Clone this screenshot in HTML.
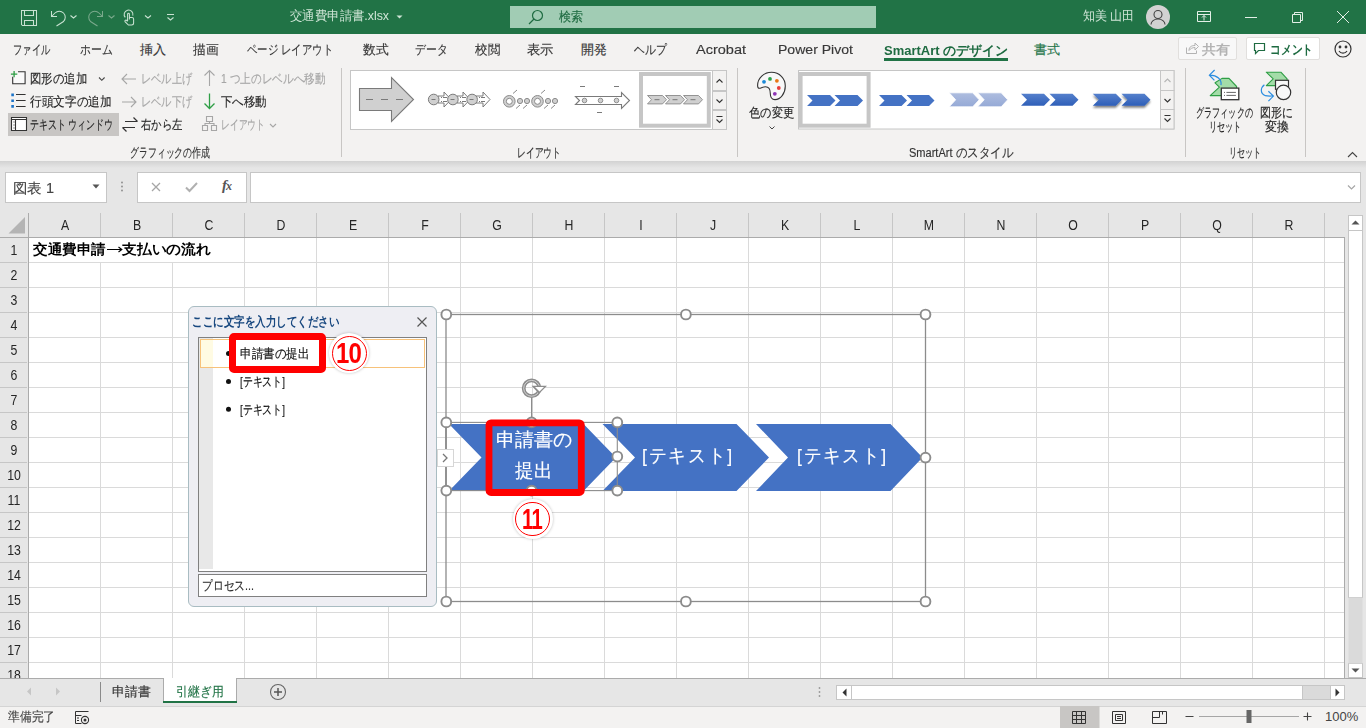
<!DOCTYPE html>
<html lang="ja"><head><meta charset="utf-8">
<style>
*{margin:0;padding:0;box-sizing:border-box}
html,body{width:1366px;height:728px;overflow:hidden;background:#fff;font-family:"Liberation Sans",sans-serif;color:#262626}
.a{position:absolute;white-space:nowrap}
.f{-webkit-text-stroke:0.15px currentColor}
.f[style*="bold"]{-webkit-text-stroke:0}
#title{left:0;top:0;width:1366px;height:34px;background:#217346}
#ribbon{left:0;top:34px;width:1366px;height:127px;background:#f3f2f1}
#fbar{left:0;top:161px;width:1366px;height:52px;background:#e6e6e6}
#shadow{left:0;top:161px;width:1366px;height:7px;background:linear-gradient(#d2d2d2,#e6e6e6)}
#colhdr{left:0;top:213px;width:1345px;height:24px;background:#e6e6e6}
#grid{left:28px;top:237px;width:1317px;height:441px;background:#fff;
 background-image:linear-gradient(to right,#dadada 1px,transparent 1px),linear-gradient(to bottom,#dadada 1px,transparent 1px);
 background-size:72px 25px;background-position:0 0}
#rowhdr{left:0;top:237px;width:28px;height:441px;background:#e6e6e6}
#vscroll{left:1345px;top:213px;width:21px;height:465px;background:#e6e6e6}
#tabbar{left:0;top:678px;width:1366px;height:28px;background:#e6e6e6;border-top:1px solid #ababab}
#status{left:0;top:706px;width:1366px;height:22px;background:#f3f2f1;border-top:1px solid #d4d4d4}
.tab{font-size:13px;color:#383838;top:41px}
.rb{font-size:12.5px;color:#262626}
.dis{color:#a6a6a6}
.gl{font-size:12.5px;color:#333;top:144.5px}
.sep{width:1px;background:#c8c6c4;top:68px;height:89px}
.ch{font-size:15px;color:#262626;top:216px;width:72px;text-align:center;transform:scaleX(.82)}
.rh{font-size:15px;color:#262626;left:0;width:28px;text-align:center;transform:scaleX(.82)}
</style></head><body>
<div id="title" class="a">
<svg class="a" style="left:0;top:0" width="190" height="34" fill="none" stroke="#c9e2d2" stroke-width="1.05">
<path d="M21.5 10.5h15v15h-14l-1-1z M24.5 10.5v5h9v-5 M24.5 25.5v-5h9v5"/>
<path d="M51.5 11v5.5h5.5 M51.5 16.5 L55 13 a6 6 0 0 1 8.5 8.5 L56.5 26"/>
<path d="M70.5 15.5l3 2.5 3-2.5"/>
<g stroke="#7aa98c"><path d="M102.5 11v5.5h-5.5 M102.5 16.5 L99 13 a6 6 0 0 0 -8.5 8.5 L97.5 26"/><path d="M108.5 15.5l3 2.5 3-2.5"/></g>
<path d="M125.3 17.4A4.4 4.4 0 1 1 132.8 15.6 M127.6 21V14.2a0.9 0.9 0 0 1 1.8 0V19.5 M129.4 17.4h2.6a1.6 1.6 0 0 1 1.6 1.6V23a2 2 0 0 1-2 2h-3.2l-3.4-3.4a1 1 0 0 1 1.4-1.3l1.2 1"/>
<path d="M145 15.5l3 2.5 3-2.5"/>
<path d="M167 14.5h7 M167.5 17.5l3 2.5 3-2.5"/>
</svg>
<div class="a f" style="left:290px;top:7px;width:99px;font-size:13px;color:#cfe5d6;-webkit-text-stroke:0">交通費申請書.xlsx</div>
<svg class="a" style="left:396px;top:15px" width="7" height="5"><path d="M0.5 0.5h6l-3 3z" fill="#cfe5d6"/></svg>
<div class="a" style="left:510px;top:6px;width:366px;height:22px;background:#a1ccb4"></div>
<svg class="a" style="left:528px;top:8px" width="16" height="17" fill="none" stroke="#1e6b41" stroke-width="1.2"><circle cx="9.5" cy="7.5" r="5"/><path d="M6 11l-5 5"/></svg>
<div class="a f" style="left:559px;top:8px;width:24px;font-size:13px;color:#1e6b41">検索</div>
<div class="a f" style="left:1083px;top:7px;width:51.5px;font-size:13px;color:#cfe5d6;-webkit-text-stroke:0">知美 山田</div>
<div class="a" style="left:1146px;top:5px;width:24px;height:24px;border-radius:50%;background:#d2d2d2"></div>
<svg class="a" style="left:1146px;top:5px" width="24" height="24" fill="none" stroke="#444" stroke-width="1.1"><circle cx="12" cy="9.5" r="4"/><path d="M5 19.5a7 5.5 0 0 1 14 0"/></svg>
<svg class="a" style="left:1190px;top:8px" width="170" height="18" fill="none" stroke="#e3efe7" stroke-width="1">
<path d="M7.5 3.5h13v10h-13z M7.5 6.5h13 M14 12.5v-5 M12 9.5l2-2 2 2"/>
<path d="M55 9.5h12"/>
<path d="M102.5 6.5h8v8h-8z M104.5 6.5v-2h8v8h-2"/>
<path d="M147 3l12 12 M159 3l-12 12"/>
</svg>
</div>
<div id="ribbon" class="a"></div>
<div class="a tab f" style="left:13px;width:37px">ファイル</div>
<div class="a tab f" style="left:80px;width:32.5px">ホーム</div>
<div class="a tab f" style="left:140px;width:26px">挿入</div>
<div class="a tab f" style="left:193px;width:25.5px">描画</div>
<div class="a tab f" style="left:247px;width:86px">ページ レイアウト</div>
<div class="a tab f" style="left:363px;width:25.5px">数式</div>
<div class="a tab f" style="left:415px;width:32.5px">データ</div>
<div class="a tab f" style="left:475px;width:25px">校閲</div>
<div class="a tab f" style="left:527px;width:26.5px">表示</div>
<div class="a tab f" style="left:581px;width:26px">開発</div>
<div class="a tab f" style="left:634px;width:32.5px">ヘルプ</div>
<div class="a tab f" style="left:696px;width:50px;top:42px">Acrobat</div>
<div class="a tab f" style="left:778px;width:75px;top:42px">Power Pivot</div>
<div class="a tab f" style="left:884px;width:124px;top:42px;color:#1e6b41;font-weight:bold">SmartArt のデザイン</div>
<div class="a" style="left:884px;top:58px;width:124px;height:3px;background:#217346"></div>
<div class="a tab f" style="left:1034px;width:26px;color:#217346">書式</div>
<div class="a" style="left:1178px;top:37px;width:59px;height:23px;border:1px solid #e1dfdd;border-radius:2px;background:#f8f8f8"></div>
<svg class="a" style="left:1185px;top:41px" width="14" height="14" fill="none" stroke="#b3b3b3" stroke-width="1"><path d="M1.5 6.5v6h10v-3 M4 9.5c0-4 3-5 6-5v-2.5l3.5 3.5-3.5 3.5v-2.5c-2.5 0-4.5 1-6 3"/></svg>
<div class="a f" style="left:1202px;top:41px;width:28px;font-size:13px;color:#b3b3b3;font-weight:bold">共有</div>
<div class="a" style="left:1246px;top:37px;width:74px;height:23px;border:1px solid #e1dfdd;border-radius:2px;background:#fff"></div>
<svg class="a" style="left:1253px;top:42px" width="14" height="14" fill="none" stroke="#1e6b41" stroke-width="1.2"><path d="M1.5 1.5h10v7h-6l-3 3v-3h-1z"/></svg>
<div class="a f" style="left:1270px;top:41px;width:43px;font-size:13px;color:#1e6b41;font-weight:bold">コメント</div>
<svg class="a" style="left:1333px;top:39px" width="20" height="20" fill="none" stroke="#333" stroke-width="1.2"><circle cx="10" cy="10" r="8"/><circle cx="7" cy="8" r=".8" fill="#333"/><circle cx="13" cy="8" r=".8" fill="#333"/><path d="M6 12a4.5 4 0 0 0 8 0"/></svg>
<!-- group1 -->
<div class="a" style="left:8px;top:113px;width:111px;height:23px;background:#c8c6c4"></div>
<svg class="a" style="left:8px;top:68px" width="280" height="72" fill="none" stroke-width="1.1">
<path d="M10 3.8h7.1v12h-12.4v-7.1" fill="#fafafa" stroke="#333"/>
<path d="M6.1 2.9v6.4 M2.9 6.1h6.4" stroke="#2e9e45" stroke-width="1.3"/>
<path d="M3.3 25.6h2.6v2.6h-2.6z M3.3 31.5h2.6v2.6h-2.6z M3.3 37.1h2.6v2.6h-2.6z" fill="#1a73c8" stroke="none"/>
<path d="M8 26.5h9.6 M8 32.5h9.6 M8 38.5h9.6" stroke="#333"/>
<path d="M3.5 49.5h15v13h-15z" fill="#fff" stroke="#333"/><path d="M3.5 51.5h15 M7.5 51.5v11 M5.5 54h1 M5.5 57h1 M5.5 60h1" stroke="#333"/>
<path d="M91 9.5l2.8 2.8 2.8-2.8" stroke="#444"/>
<g stroke="#a6a6a6"><path d="M114 11h14 M119 6l-5 5 5 5"/><path d="M114 34h14 M123 29l5 5-5 5"/>
<path d="M201.5 2.5v15.5 M196.5 7.5l5-5 5 5"/>
<path d="M198.5 48.5h6v5h-6z M194.5 57.5h5v5h-5z M203.5 57.5h5v5h-5z M201.5 53.5v2 M197 57.5v-2h9v2"/>
<path d="M262 56l3 3 3-3"/></g>
<path d="M117 53.5h12.5 M125.5 49.5l4 4 M127 59.5h-12.5 M118.5 63.5l-4-4" stroke="#333" stroke-width="1.2"/>
<path d="M201.5 25.5v15 M196.5 35.5l5 5 5-5" stroke="#2e9e45" stroke-width="1.3"/>
</svg>
<div class="a rb f" style="left:30px;top:71px;width:57px">図形の追加</div>
<div class="a rb f" style="left:30px;top:94px;width:81.5px">行頭文字の追加</div>
<div class="a rb f" style="left:30px;top:117px;width:83px">テキスト ウィンドウ</div>
<div class="a rb dis f" style="left:141px;top:71px;width:51px">レベル上げ</div>
<div class="a rb dis f" style="left:141px;top:94px;width:51px">レベル下げ</div>
<div class="a rb f" style="left:141px;top:117px;width:41.6px">右から左</div>
<div class="a rb dis f" style="left:221px;top:71px;width:104.6px">1 つ上のレベルへ移動</div>
<div class="a rb f" style="left:221px;top:94px;width:45.7px">下へ移動</div>
<div class="a rb dis f" style="left:221px;top:117px;width:44px">レイアウト</div>
<div class="a gl f" style="left:129.5px;width:80px">グラフィックの作成</div>
<div class="a sep" style="left:341px"></div>
<!-- galleries -->
<svg class="a" style="left:0;top:0" width="1366" height="161" fill="none">
<rect x="350.5" y="70.5" width="376" height="59" fill="#fff" stroke="#c6c6c6"/>
<rect x="712.5" y="70.5" width="14" height="20" fill="#f3f2f1" stroke="#c6c6c6"/>
<rect x="712.5" y="91.5" width="14" height="18" fill="#f3f2f1" stroke="#c6c6c6"/>
<rect x="712.5" y="110.5" width="14" height="19" fill="#f3f2f1" stroke="#c6c6c6"/>
<g stroke="#333" stroke-width="1.1"><path d="M716.5 82.5l3-3 3 3 M716.5 99.5l3 3 3-3 M716.5 116.5h6 M716.5 119.5l3 3 3-3"/></g>
<!-- item1 -->
<path d="M359.5 88.5h32v-11l22 22-22 22v-11h-32z" fill="#d0d0d0" stroke="#7a7a7a" stroke-width="1.1"/>
<path d="M366 99.5h7 M381 99.5h7 M396 99.5h7" stroke="#7a7a7a" stroke-width="1.1"/>
<!-- item2 -->
<g stroke="#7a7a7a" stroke-width="1">
<path d="M438 96h6v-4l7 7.5-7 7.5v-4h-6z" fill="#fff"/>
<path d="M457 96h6v-4l7 7.5-7 7.5v-4h-6z" fill="#fff"/>
<path d="M476 96h7v-4l7 7.5-7 7.5v-4h-7z" fill="#fff"/>
<circle cx="433.7" cy="99.5" r="5.3" fill="#d0d0d0"/><circle cx="452.9" cy="99.5" r="5.3" fill="#d0d0d0"/><circle cx="472.1" cy="99.5" r="5.3" fill="#d0d0d0"/>
<path d="M431.5 99.5h4 M450.5 99.5h4 M469.5 99.5h4 M441 97.5h1 M443 97.5h4 M441 101.5h1 M443 101.5h4 M460 97.5h1 M462 97.5h4 M460 101.5h1 M462 101.5h4 M479 97.5h1 M481 97.5h4 M479 101.5h1 M481 101.5h4"/>
</g>
<!-- item3 -->
<g stroke="#8a8a8a" stroke-width="1">
<circle cx="509.3" cy="101.3" r="5.8" fill="#d0d0d0"/><circle cx="509.3" cy="101.3" r="3" fill="#fff"/>
<circle cx="537.5" cy="101.3" r="5.8" fill="#d0d0d0"/><circle cx="537.5" cy="101.3" r="3" fill="#fff"/>
<circle cx="520" cy="101" r="2.6" fill="#d0d0d0"/><circle cx="527" cy="101" r="2.6" fill="#d0d0d0"/>
<circle cx="548" cy="101" r="2.6" fill="#d0d0d0"/><circle cx="555" cy="101" r="2.6" fill="#d0d0d0"/>
<path d="M513 93.5l4-3.5 M541 93.5l4-3.5 M516 108.5l4-3.5 M523 108.5l4-3.5 M544 108.5l4-3.5 M551 108.5l4-3.5"/>
</g>
<!-- item4 -->
<g stroke="#7a7a7a" stroke-width="1.1">
<path d="M575.5 96.5h46v-4l8 8-8 8v-4h-46l4-4z" fill="#fff"/>
<circle cx="584.5" cy="100.5" r="2.3" fill="#d0d0d0" stroke-width="0.8"/><circle cx="600.5" cy="100.5" r="2.3" fill="#d0d0d0" stroke-width="0.8"/><circle cx="616.5" cy="100.5" r="2.3" fill="#d0d0d0" stroke-width="0.8"/>
<path d="M580 86.5h5 M614 86.5h5 M597 112.5h5"/>
</g>
<!-- item5 -->
<rect x="641" y="74" width="67.8" height="51.7" stroke="#c6c6c6" stroke-width="4"/>
<g stroke="#8a8a8a" stroke-width="0.9" fill="#d0d0d0">
<path d="M647.5 95.5h15.0l4.0 4.2l-4.0 4.2h-15.0l4.0 -4.2z"/><path d="M665.5 95.5h15.0l4.0 4.2l-4.0 4.2h-15.0l4.0 -4.2z"/><path d="M683.5 95.5h15.0l4.0 4.2l-4.0 4.2h-15.0l4.0 -4.2z"/>
</g>
<path d="M654.5 99.7h5 M672.5 99.7h5 M690.5 99.7h5" stroke="#777" stroke-width="1"/>
<!-- style gallery -->
<rect x="798.5" y="70.5" width="375.5" height="58.5" fill="#fff" stroke="#c6c6c6"/>
<rect x="1160.5" y="70.5" width="13.5" height="20" fill="#f3f2f1" stroke="#c6c6c6"/>
<rect x="1160.5" y="90.5" width="13.5" height="19" fill="#f3f2f1" stroke="#c6c6c6"/>
<rect x="1160.5" y="109.5" width="13.5" height="19.5" fill="#f3f2f1" stroke="#c6c6c6"/>
<g stroke-width="1.1"><path d="M1164.5 82l3-3 3 3" stroke="#b5b5b5"/><path d="M1164.5 99l3 3 3-3 M1164.5 115.5h6 M1164.5 118.5l3 3 3-3" stroke="#333"/></g>
<rect x="800.6" y="74" width="68" height="51.7" stroke="#c6c6c6" stroke-width="4"/>
<defs>
<linearGradient id="g3" x1="0" y1="0" x2="0" y2="1"><stop offset="0" stop-color="#aebddf"/><stop offset="1" stop-color="#95a9d6"/></linearGradient>
<linearGradient id="g4" x1="0" y1="0" x2="0" y2="1"><stop offset="0" stop-color="#5580cc"/><stop offset="1" stop-color="#2f5fb8"/></linearGradient>
<filter id="sh" x="-20%" y="-30%" width="140%" height="170%"><feGaussianBlur in="SourceAlpha" stdDeviation="1"/><feOffset dy="1.5"/><feComponentTransfer><feFuncA type="linear" slope="0.5"/></feComponentTransfer><feMerge><feMergeNode/><feMergeNode in="SourceGraphic"/></feMerge></filter>
</defs>
<g fill="#4472c4">
<path d="M807.0 95.0h23.0l5.5 5.5l-5.5 5.5h-23.0l5.5 -5.5z"/><path d="M834.5 95.0h23.0l5.5 5.5l-5.5 5.5h-23.0l5.5 -5.5z"/>
<path d="M879.0 95.0h22.5l5.5 5.5l-5.5 5.5h-22.5l5.5 -5.5z"/><path d="M906.5 95.0h22.5l5.5 5.5l-5.5 5.5h-22.5l5.5 -5.5z"/>
</g>
<g fill="url(#g3)" stroke="#fff" stroke-width="0.8">
<path d="M949.2 92.8h23.5l6.5 7.0l-6.5 7.0h-23.5l6.5 -7.0z"/><path d="M977.7 92.8h23.5l6.5 7.0l-6.5 7.0h-23.5l6.5 -7.0z"/>
</g>
<g fill="url(#g4)">
<path d="M1021.0 93.7h23.0l6.0 6.0l-6.0 6.0h-23.0l6.0 -6.0z"/><path d="M1049.5 93.7h23.0l6.0 6.0l-6.0 6.0h-23.0l6.0 -6.0z"/>
</g>
<g fill="url(#g4)" filter="url(#sh)">
<path d="M1092.8 93.7h23.0l6.0 6.0l-6.0 6.0h-23.0l6.0 -6.0z"/><path d="M1121.5 93.7h23.0l6.0 6.0l-6.0 6.0h-23.0l6.0 -6.0z"/>
</g>
<!-- palette -->
<path d="M757.6 85.5C757.6 78 764 72.3 771.5 72.3C779.5 72.3 785.3 78.5 785.3 86C785.3 93.5 780.5 99.6 775 99.6C771.5 99.6 770.3 97 770.3 93.5C770.3 89.5 768.5 86.8 765.5 86.8C762.5 86.8 761 88.3 759.3 88.3C758.2 88.3 757.6 87.2 757.6 85.5z" fill="#f8f8f8" stroke="#333" stroke-width="1.1"/>
<circle cx="764" cy="81.8" r="1.9" fill="#1c8ad7"/><circle cx="770" cy="78.9" r="1.9" fill="#2aa148"/><circle cx="776.9" cy="80.8" r="1.9" fill="#e87715"/><circle cx="778.8" cy="88" r="1.9" fill="#e83e3e"/><circle cx="774.8" cy="93.8" r="1.9" fill="#8e35b5"/>
<path d="M769.5 126.5l2.5 2.5 2.5-2.5" stroke="#444" stroke-width="1"/>
</svg>
<div class="a rb f" style="left:748.5px;top:105px;width:45px">色の変更</div>
<div class="a gl f" style="left:517px;width:44px">レイアウト</div>
<div class="a sep" style="left:737px"></div>
<div class="a gl f" style="left:909px;width:104px">SmartArt のスタイル</div>
<div class="a sep" style="left:1185px"></div>
<div class="a sep" style="left:1305px"></div>
<!-- reset group -->
<svg class="a" style="left:1190px;top:65px" width="176" height="96" fill="none">
<path d="M32 13.4h7l7.6 8.1v9.1h-26.4l9.2-8.4-4.4-4.4z" fill="#a3dca8" stroke="#2e9e45" stroke-width="1.1" stroke-linejoin="round"/>
<rect x="31.3" y="23.1" width="17.5" height="11.6" fill="#fff" stroke="#333" stroke-width="1.3"/>
<path d="M34 27.4h1 M36.4 27.4h9.5 M34 30.4h1 M36.4 30.4h9.5" stroke="#555" stroke-width="0.9"/>
<path d="M31 20.2c1-6-4-10-11-10 M24.6 5l-5.2 5.2 5 5.2" stroke="#2b8de0" stroke-width="1.2"/>
<path d="M76.3 7.2h14.6l6.2 6.6v6.8h-20.8l6.9-6.8z" fill="#a3dca8" stroke="#2e9e45" stroke-width="1.1" stroke-linejoin="round"/>
<rect x="85.5" y="15.3" width="13" height="9" fill="#f8f8f8" stroke="#333" stroke-width="1.2"/>
<circle cx="93.5" cy="27.4" r="7.2" fill="#f8f8f8" stroke="#333" stroke-width="1.2"/>
<path d="M74.4 19.7c-4 3-4.5 9 1 11 2 .5 5 .3 8 .3 M78.4 26.3l5 4.8-5 5" stroke="#2b8de0" stroke-width="1.2"/>
<path d="M158 92l4.5-4.5 4.5 4.5" stroke="#444" stroke-width="1.1"/>
</svg>
<div class="a rb f" style="left:1196px;top:105px;width:56.7px">グラフィックの</div>
<div class="a rb f" style="left:1208.5px;top:119px;width:32.5px">リセット</div>
<div class="a rb f" style="left:1260px;top:105px;width:33px">図形に</div>
<div class="a rb f" style="left:1265px;top:119px;width:24px">変換</div>
<div class="a gl f" style="left:1228.7px;width:32.3px">リセット</div>
<div id="fbar" class="a"></div>
<div id="shadow" class="a"></div>
<div class="a" style="left:5px;top:172px;width:102px;height:31px;background:#fff;border:1px solid #c6c6c6"></div>
<div class="a f" style="left:12.5px;top:180px;width:41px;font-size:14px;color:#444">図表 1</div>

<div class="a" style="left:137px;top:172px;width:110px;height:31px;background:#fff;border:1px solid #c6c6c6"></div>
<div class="a" style="left:222px;top:177px;font-family:'Liberation Serif',serif;font-style:italic;font-weight:bold;font-size:15px;color:#555;letter-spacing:-1px">f<span style="font-size:12px">x</span></div>
<div class="a" style="left:250px;top:172px;width:1111px;height:31px;background:#fff;border:1px solid #c6c6c6"></div>
<svg class="a" style="left:0;top:165px" width="1366" height="48" fill="none">
<path d="M92.5 19.5h7l-3.5 4z" fill="#555"/>
<circle cx="122" cy="17.5" r=".9" fill="#8a8a8a"/><circle cx="122" cy="21.5" r=".9" fill="#8a8a8a"/><circle cx="122" cy="25.5" r=".9" fill="#8a8a8a"/>
<path d="M152 18l8 8 M160 18l-8 8" stroke="#a6a6a6" stroke-width="1.3"/>
<path d="M186 22.5l3.5 3.5 7.5-8" stroke="#b0b0b0" stroke-width="2"/>
<path d="M1348 20.5l3.5 3.5 3.5-3.5" stroke="#a6a6a6" stroke-width="1.2"/>
</svg>

<div id="colhdr" class="a"></div>
<div id="grid" class="a"></div>
<div id="rowhdr" class="a"></div>
<div id="vscroll" class="a"></div>
<svg class="a" style="left:1345px;top:213px" width="21" height="465" fill="none">
<rect x="3.5" y="2.5" width="14" height="15" fill="#fff" stroke="#c6c6c6"/>
<rect x="3.5" y="17.5" width="14" height="367" fill="#fff" stroke="#c6c6c6"/>
<rect x="3.5" y="450.5" width="14" height="14" fill="#fff" stroke="#c6c6c6"/>
<path d="M6.5 11.5h8l-4-4z M6.5 455.5h8l-4 4z" fill="#555"/>
<rect x="3.5" y="384.5" width="14" height="66" fill="#dadada" stroke="none"/>
</svg>
<div class="a ch" style="left:29px">A</div><div class="a ch" style="left:101px">B</div><div class="a ch" style="left:173px">C</div><div class="a ch" style="left:245px">D</div><div class="a ch" style="left:317px">E</div><div class="a ch" style="left:389px">F</div><div class="a ch" style="left:461px">G</div><div class="a ch" style="left:533px">H</div><div class="a ch" style="left:605px">I</div><div class="a ch" style="left:677px">J</div><div class="a ch" style="left:749px">K</div><div class="a ch" style="left:821px">L</div><div class="a ch" style="left:893px">M</div><div class="a ch" style="left:965px">N</div><div class="a ch" style="left:1037px">O</div><div class="a ch" style="left:1109px">P</div><div class="a ch" style="left:1181px">Q</div><div class="a ch" style="left:1253px">R</div>
<div class="a rh" style="top:241px">1</div><div class="a rh" style="top:266px">2</div><div class="a rh" style="top:291px">3</div><div class="a rh" style="top:316px">4</div><div class="a rh" style="top:341px">5</div><div class="a rh" style="top:366px">6</div><div class="a rh" style="top:391px">7</div><div class="a rh" style="top:416px">8</div><div class="a rh" style="top:441px">9</div><div class="a rh" style="top:466px">10</div><div class="a rh" style="top:491px">11</div><div class="a rh" style="top:516px">12</div><div class="a rh" style="top:541px">13</div><div class="a rh" style="top:566px">14</div><div class="a rh" style="top:591px">15</div><div class="a rh" style="top:616px">16</div><div class="a rh" style="top:641px">17</div><div class="a rh" style="top:666px">18</div>
<svg class="a" style="left:0;top:213px" width="1345" height="465" fill="none"><path d="M100.5 0v24 M172.5 0v24 M244.5 0v24 M316.5 0v24 M388.5 0v24 M460.5 0v24 M532.5 0v24 M604.5 0v24 M676.5 0v24 M748.5 0v24 M820.5 0v24 M892.5 0v24 M964.5 0v24 M1036.5 0v24 M1108.5 0v24 M1180.5 0v24 M1252.5 0v24 M1324.5 0v24 " stroke="#c6c6c6"/><path d="M28.5 0v465 M0 24.5h1345 M1344.5 24v441" stroke="#ababab"/><path d="M0 49.5h27 M0 74.5h27 M0 99.5h27 M0 124.5h27 M0 149.5h27 M0 174.5h27 M0 199.5h27 M0 224.5h27 M0 249.5h27 M0 274.5h27 M0 299.5h27 M0 324.5h27 M0 349.5h27 M0 374.5h27 M0 399.5h27 M0 424.5h27 M0 449.5h27 " stroke="#c6c6c6"/><path d="M8.5 20.5h16.5v-16.5z" fill="#b4b4b4"/></svg>
<div class="a" style="left:29px;top:238px;width:215px;height:24px;background:#fff"></div>
<div class="a f" style="left:33px;top:241px;width:72.6px;font-size:14px;font-weight:bold;color:#000">交通費申請</div>
<svg class="a" style="left:105px;top:243px" width="18" height="12" fill="none"><path d="M2 6.5h15 M13.5 4l3.3 2.5-3.3 2.5" stroke="#000" stroke-width="1.15"/></svg>
<div class="a f" style="left:122.4px;top:241px;width:88.6px;font-size:14px;font-weight:bold;color:#000">支払いの流れ</div>

<!-- smartart -->
<svg class="a" style="left:0;top:0" width="1366" height="728" fill="none">
<rect x="446" y="314.5" width="479.5" height="287" stroke="#8c8c8c" stroke-width="1.3"/>
<g fill="#4472c4">
<path d="M449.0 424.0h134.5l32.5 33.5l-32.5 33.5h-134.5l32.5 -33.5z"/>
<path d="M602.5 424.0h134.0l32.5 33.5l-32.5 33.5h-134.0l32.5 -33.5z"/>
<path d="M756.0 424.0h134.5l32.0 33.5l-32.0 33.5h-134.5l32.0 -33.5z"/>
</g>
<rect x="446" y="422.4" width="171.3" height="68.2" stroke="#8c8c8c" stroke-width="1.1"/>
<path d="M531.6 398v24.4" stroke="#8c8c8c" stroke-width="1.2"/>
<circle cx="531.6" cy="388.3" r="7.9" stroke="#8c8c8c" stroke-width="3.8"/>
<circle cx="531.6" cy="388.3" r="7.9" stroke="#fff" stroke-width="0.6"/>
<path d="M531.5 385.8h15.5l-8 8z" fill="#8c8c8c"/>
<path d="M535 387h9l-4.5 4.5z" fill="#fff"/>
<circle cx="446.3" cy="314.5" r="4.9" fill="#fff" stroke="#8c8c8c" stroke-width="1.9"/><circle cx="685.9" cy="314.5" r="4.9" fill="#fff" stroke="#8c8c8c" stroke-width="1.9"/><circle cx="925.5" cy="314.5" r="4.9" fill="#fff" stroke="#8c8c8c" stroke-width="1.9"/><circle cx="925.5" cy="457.6" r="4.9" fill="#fff" stroke="#8c8c8c" stroke-width="1.9"/><circle cx="446.3" cy="601.5" r="4.9" fill="#fff" stroke="#8c8c8c" stroke-width="1.9"/><circle cx="685.9" cy="601.5" r="4.9" fill="#fff" stroke="#8c8c8c" stroke-width="1.9"/><circle cx="925.5" cy="601.5" r="4.9" fill="#fff" stroke="#8c8c8c" stroke-width="1.9"/><circle cx="446.3" cy="422.4" r="4.9" fill="#fff" stroke="#8c8c8c" stroke-width="1.9"/><circle cx="617.3" cy="422.4" r="4.9" fill="#fff" stroke="#8c8c8c" stroke-width="1.9"/><circle cx="446.3" cy="490.6" r="4.9" fill="#fff" stroke="#8c8c8c" stroke-width="1.9"/><circle cx="617.3" cy="490.6" r="4.9" fill="#fff" stroke="#8c8c8c" stroke-width="1.9"/><circle cx="617.3" cy="456.5" r="4.9" fill="#fff" stroke="#8c8c8c" stroke-width="1.9"/><circle cx="531.6" cy="422.4" r="4.9" fill="#fff" stroke="#8c8c8c" stroke-width="1.9"/><circle cx="531.6" cy="490.6" r="4.9" fill="#fff" stroke="#8c8c8c" stroke-width="1.9"/>
<path d="M446 428v57" stroke="#8c8c8c" stroke-width="1.3"/>
<rect x="437.5" y="449.5" width="16" height="17" fill="#fff" stroke="#d6d6d6"/>
<path d="M443 454l4 4-4 4" stroke="#777" stroke-width="1.3"/>
<rect x="489" y="422.8" width="92.3" height="69.7" rx="2" stroke="#ff0000" stroke-width="6.8"/>
</svg>
<div class="a f" style="left:495.5px;top:427px;width:76.5px;font-size:19px;color:#fff">申請書の</div>
<div class="a f" style="left:514.5px;top:458px;width:37px;font-size:19px;color:#fff">提出</div>
<div class="a f" style="left:642px;top:443px;width:92px;font-size:19px;color:#fff;letter-spacing:2px">[テキスト]</div>
<div class="a f" style="left:796.5px;top:443px;width:91px;font-size:19px;color:#fff;letter-spacing:2px">[テキスト]</div>
<div class="a" style="left:512.5px;top:499px;width:40px;height:40px;border-radius:50%;background:#fff;box-shadow:0 0 3px rgba(0,0,0,.25)"></div>
<div class="a" style="left:515.2px;top:501.5px;width:34.6px;height:34.6px;border-radius:50%;border:1.3px solid #ff0000"></div>
<div class="a f" style="left:521.5px;top:502.5px;width:20px;font-size:29px;font-weight:bold;color:#ff0000;letter-spacing:-1px">11</div>
<!-- text pane -->
<div class="a" style="left:188px;top:306px;width:249px;height:301px;background:#eeeef3;border:1px solid #a9bcc2;border-radius:6px"></div>
<div class="a f" style="left:191.5px;top:314px;width:147px;font-size:12.5px;font-weight:bold;color:#17477f">ここに文字を入力してください</div>
<svg class="a" style="left:416px;top:316px" width="12" height="12" fill="none"><path d="M1.5 1.5l9 9 M10.5 1.5l-9 9" stroke="#555" stroke-width="1.2"/></svg>
<div class="a" style="left:198px;top:337px;width:229px;height:235px;background:#fff;border:1px solid #808080"></div>
<div class="a" style="left:199px;top:338px;width:14px;height:231px;background:#e8e8e8"></div>
<div class="a" style="left:200px;top:339px;width:225px;height:29px;background:#fff;border:1px solid #f7c27a"></div>
<div class="a" style="left:201px;top:340px;width:12px;height:27px;background:#fffbe3"></div>
<div class="a" style="left:198px;top:574px;width:229px;height:23px;background:#fff;border:1px solid #808080"></div>
<div class="a f" style="left:202px;top:577px;width:52px;font-size:13px;color:#333">プロセス...</div>
<svg class="a" style="left:220px;top:340px" width="20" height="80"><circle cx="8.5" cy="13.5" r="2.5" fill="#111"/><circle cx="8.5" cy="41.4" r="2.5" fill="#111"/><circle cx="8.5" cy="69.2" r="2.5" fill="#111"/></svg>
<div class="a f" style="left:239.5px;top:373px;width:45px;font-size:13px;color:#111">[テキスト]</div>
<div class="a f" style="left:239.5px;top:401px;width:45px;font-size:13px;color:#111">[テキスト]</div>
<!-- red box 1 -->
<div class="a" style="left:229px;top:333px;width:97px;height:40px;border:7px solid #ff0000;border-radius:5px;background:#fff"></div>
<div class="a f" style="left:239.5px;top:345px;width:69px;font-size:13px;color:#111">申請書の提出</div>
<div class="a" style="left:329px;top:333px;width:40px;height:40px;border-radius:50%;background:#fff;box-shadow:0 0 3px rgba(0,0,0,.25)"></div>
<div class="a" style="left:331.5px;top:335.5px;width:35px;height:35px;border-radius:50%;border:1.3px solid #ff0000"></div>
<div class="a f" style="left:336px;top:337px;width:25px;font-size:29px;font-weight:bold;color:#ff0000;letter-spacing:-1px">10</div>
<div id="tabbar" class="a"></div>
<svg class="a" style="left:0;top:678px" width="1366" height="50" fill="none">
<path d="M31 9.5v8l-4-4z" fill="#c6c6c6"/><path d="M56 9.5v8l4-4z" fill="#c6c6c6"/>
<path d="M100.5 4v20" stroke="#8a8a8a"/>
<path d="M163.5 0.5v23.5 M236.5 0.5v23.5" stroke="#ababab"/>
<rect x="164" y="0" width="72" height="24" fill="#fff"/>
<rect x="163" y="23" width="74" height="2" fill="#217346"/>
<circle cx="278" cy="14" r="7.5" stroke="#666" stroke-width="1.1"/>
<path d="M278 10v8 M274 14h8" stroke="#555" stroke-width="1.5"/>
<circle cx="819.5" cy="10" r=".9" fill="#999"/><circle cx="819.5" cy="14" r=".9" fill="#999"/><circle cx="819.5" cy="18" r=".9" fill="#999"/>
<rect x="836.5" y="7.5" width="508" height="14" fill="#fff" stroke="#c6c6c6"/>
<rect x="1302" y="8" width="28.5" height="13" fill="#dadada"/>
<path d="M851.5 8v13 M1302.5 8v13 M1330.5 8v13" stroke="#c6c6c6"/>
<path d="M846.5 10.5v8l-4-4z M1335.5 10.5v8l4-4z" fill="#333"/>
</svg>
<div class="a f" style="left:112px;top:683px;width:38.5px;font-size:13px;color:#333">申請書</div>
<div class="a f" style="left:175.5px;top:683px;width:47.5px;font-size:13px;color:#217346">引継ぎ用</div>
<div id="status" class="a"></div>
<div class="a f" style="left:8px;top:709px;width:47px;font-size:12.5px;color:#444">準備完了</div>
<svg class="a" style="left:0;top:706px" width="1366" height="22" fill="none">
<path d="M75.5 5.5h13 M75.5 5.5v12h6 M75.5 9.5h6 M77 12h2 M77 14.5h2" stroke="#333" stroke-width="1"/>
<circle cx="85" cy="14" r="3.6" stroke="#333" stroke-width="1.1"/><circle cx="85" cy="14" r="1.5" fill="#333"/>
<rect x="1060" y="0" width="39.5" height="22" fill="#c8c6c4"/>
<path d="M1072.5 5.5h13v12h-13z M1072.5 9.5h13 M1072.5 13.5h13 M1076.5 5.5v12 M1081.5 5.5v12" stroke="#333" stroke-width="1"/>
<path d="M1112.5 5.5h13v12h-13z M1115.5 8.5h7v6h-7z M1117 10.5h4 M1117 12.5h4" stroke="#333" stroke-width="1"/>
<path d="M1152.5 5.5h14v12h-14z M1159.5 5.5v6h-7 M1162.5 5.5v3" stroke="#333" stroke-width="1"/>
<path d="M1185.5 10.5h8 M1303.5 10.5h8 M1307.5 6.5v8" stroke="#444" stroke-width="1.1"/>
<path d="M1199 10.5h100" stroke="#a6a6a6" stroke-width="1"/>
<rect x="1246.5" y="4" width="5" height="13" fill="#666"/>
</svg>
<div class="a" style="left:1325px;top:709px;font-size:13px;color:#444">100%</div>
<script>
(function(){var els=document.querySelectorAll('.f');for(var i=0;i<els.length;i++){var e=els[i];var w=parseFloat(e.style.width);e.style.width='auto';e.style.display='inline-block';var r=e.getBoundingClientRect().width;e.style.width=w+'px';e.style.transformOrigin='0 0';if(r>0)e.style.transform='scaleX('+(w/r)+')';}})();
</script>
</body></html>
